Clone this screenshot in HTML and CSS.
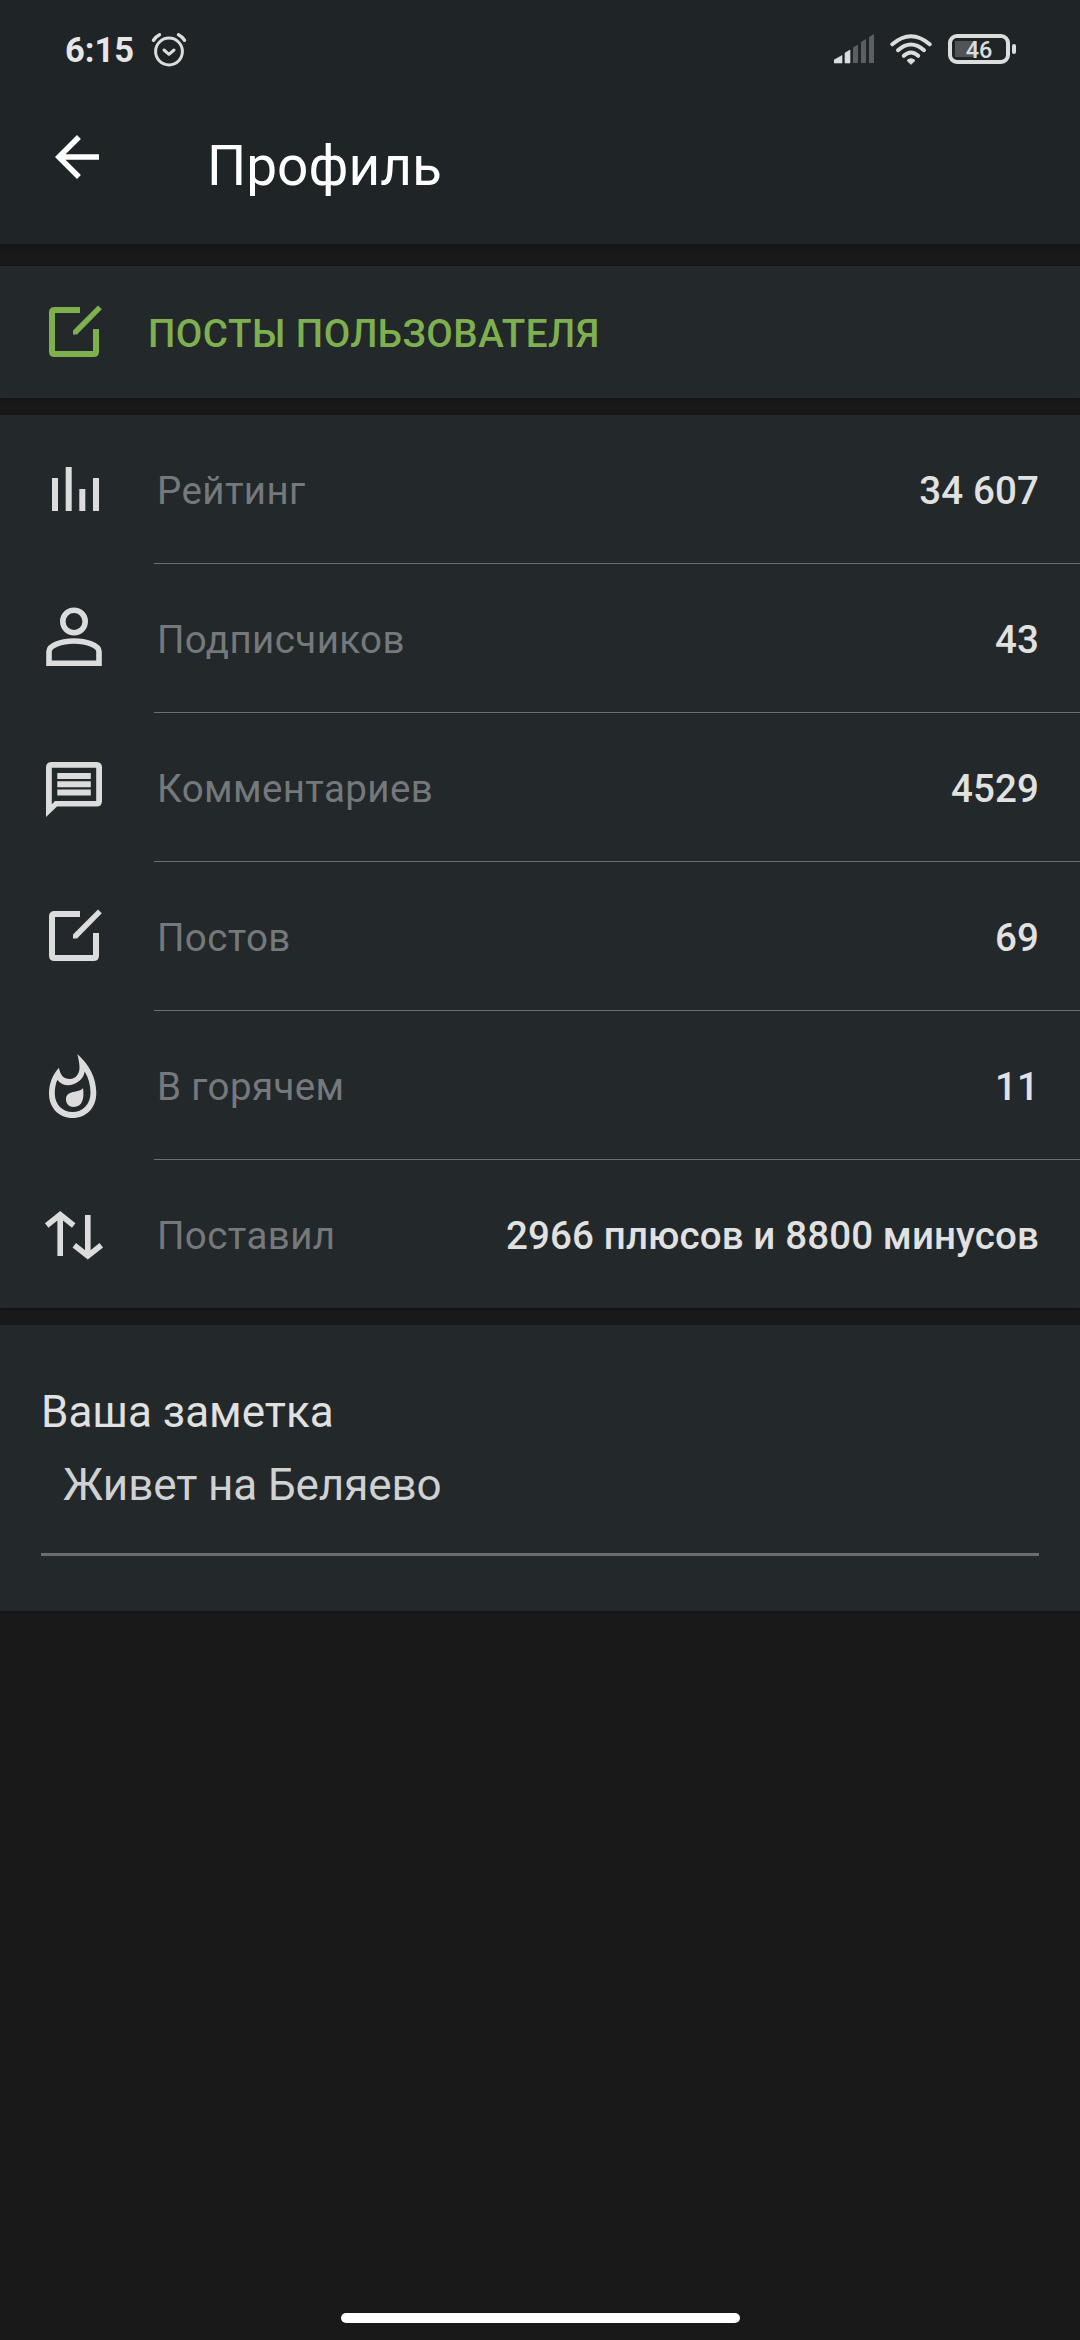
FILE: index.html
```html
<!DOCTYPE html>
<html lang="ru">
<head>
    <meta charset="UTF-8">
    <meta name="viewport" content="width=device-width, initial-scale=1.0">
    <title>Профиль</title>
    <link rel="stylesheet" href="styles.css">
</head>
<body>
    <svg class="sprite">
        <symbol id="icon-edit" viewBox="0 0 66 66">
            <path d="M39 11H13.500Q11 11 11 13.500V52.500Q11 55 13.500 55H52.500Q55 55 55 52.500V30" fill="none" stroke="currentColor" stroke-width="6"/>
            <path d="M57 6.5L60.8 10.2L36 35.5H32V31.5Z" fill="currentColor"/>
        </symbol>
    </svg>

    <header class="header">
        <div class="status-bar">
            <span class="time">6:15</span>
            <svg class="alarm" width="36" height="36" viewBox="0 0 36 36">
                <g fill="none" stroke="currentColor" stroke-width="3" stroke-linecap="round" stroke-linejoin="round">
                    <circle cx="18" cy="19.5" r="13.4"/>
                    <path d="M13 18L18 22.3L23 18"/>
                    <path d="M2.5 8.3Q5 4.5 8.5 2.8M33.5 8.3Q31 4.5 27.5 2.8" stroke-width="3.4"/>
                </g>
            </svg>
            <div class="status-icons">
                <svg width="40" height="30" viewBox="0 0 40 30">
                    <path d="M0 29V26L8 21.5V29ZM11 29V19L16 16V29Z" fill="currentColor" stroke="currentColor" stroke-width=".6" stroke-linejoin="round"/>
                    <path d="M19 29V13.5L24 10.5V29ZM27 29V8L32 5V29ZM35 29V3L40 0V29Z" fill="#5b5f61"/>
                </svg>
                <svg width="42" height="31" viewBox="0 0 42 31">
                    <g fill="none" stroke="currentColor" stroke-width="4" stroke-linecap="round">
                        <path d="M2.3 10.3Q21 -5.8 39.7 10.3"/>
                        <path d="M8 16.2Q21 4.8 34 16.2"/>
                        <path d="M13.8 21.8Q21 15.2 28.2 21.8"/>
                    </g>
                    <path d="M17 26.5Q21 23 25 26.5L21 30.3Z" fill="currentColor" stroke="currentColor" stroke-linejoin="round"/>
                </svg>
                <div class="battery"><span>46</span></div>
            </div>
        </div>
        <div class="toolbar">
            <svg class="back" viewBox="0 0 24 24">
                <path d="M20 11H7.83l5.59-5.59L12 4l-8 8 8 8 1.41-1.41L7.83 13H20v-2z" fill="currentColor"/>
            </svg>
            <h1>Профиль</h1>
        </div>
    </header>

    <main>
        <a class="card posts-link">
            <svg class="icon"><use href="#icon-edit"/></svg>
            <span>ПОСТЫ ПОЛЬЗОВАТЕЛЯ</span>
        </a>

        <ul class="card stats">
            <li>
                <svg class="icon" viewBox="0 0 66 66">
                    <path d="M11 22h6v33h-6zM24.7 11h6v44h-6zM38.3 33h6v22h-6zM52 22h6v33h-6z" fill="currentColor"/>
                </svg>
                <div class="stat"><span class="label">Рейтинг</span><span class="value">34 607</span></div>
            </li>
            <li>
                <svg class="icon" viewBox="0 0 66 66">
                    <g fill="none" stroke="currentColor" stroke-width="5.6">
                        <circle cx="33" cy="16.5" r="11.2"/>
                        <path d="M8 58.2V46.5C8 40 21 36 33 36S58 40 58 46.5V58.2Z"/>
                    </g>
                </svg>
                <div class="stat"><span class="label">Подписчиков</span><span class="value">43</span></div>
            </li>
            <li>
                <svg class="icon" viewBox="0 0 66 66">
                    <path d="M10.5 8H55.5Q61 8 61 13.5V47Q61 52.5 55.5 52.5H16L5 63V13.5Q5 8 10.5 8ZM10.8 13.8V50.3L14 47H55.2V13.8Z" fill="currentColor" fill-rule="evenodd"/>
                    <path d="M16.3 19h33.5v6H16.3zM16.3 27.2h33.5v6H16.3zM16.3 35.5h33.5v6H16.3z" fill="currentColor"/>
                </svg>
                <div class="stat"><span class="label">Комментариев</span><span class="value">4529</span></div>
            </li>
            <li>
                <svg class="icon"><use href="#icon-edit"/></svg>
                <div class="stat"><span class="label">Постов</span><span class="value">69</span></div>
            </li>
            <li>
                <svg class="icon" viewBox="0 0 66 66">
                    <path fill="currentColor" fill-rule="evenodd" d="M36.3 2C47.5 12 55.3 25 55.3 41C55.3 56 45 66 31.7 66C18 66 8 56 8 41.5C8 31 12 22 18 15.7C19 23 23 27 28.5 27C36 27 39.5 20 38.3 12.5C38 8.5 37 5 36.3 2ZM16.3 28C21 33.5 27 34.5 33 32C39 29.5 43 25 43.6 19.5C47.5 25.5 49.5 33 49.5 41C49.5 52.5 41.5 60 31.7 60C21.5 60 13.8 52.5 13.8 41.5C13.8 36.5 14.5 32 16.3 28Z"/>
                    <path fill="currentColor" d="M42 36C38 41.5 25 37.5 25 47.5C25 52 28.3 55 32.5 55C41.5 55 43.5 46 42 36Z"/>
                </svg>
                <div class="stat"><span class="label">В горячем</span><span class="value">11</span></div>
            </li>
            <li>
                <svg class="icon" viewBox="0 0 66 66">
                    <path d="M19.2 55V15M5.7 24.5L19.2 13.5L32.7 24.5M46.8 14V54M33.3 44.2L46.8 55L60.3 44.2" fill="none" stroke="currentColor" stroke-width="5.6"/>
                </svg>
                <div class="stat"><span class="label">Поставил</span><span class="value">2966 плюсов и 8800 минусов</span></div>
            </li>
        </ul>

        <section class="card note">
            <h2>Ваша заметка</h2>
            <p>Живет на Беляево</p>
        </section>
    </main>

    <div class="home-bar"></div>
</body>
</html>
```
FILE: styles.css
```css
:root {
    --bg: #191919;
    --header: #1f2426;
    --card: #23282b;
    --accent: #7fb04f;
    --text: #e1e1e1;
    --icon: #dcdcdc;
    --muted: #75797b;
    --line: #696e70;
}

* {
    margin: 0;
    padding: 0;
    box-sizing: border-box;
}

body {
    display: flex;
    flex-direction: column;
    height: 2340px;
    background: var(--bg);
    color: var(--text);
    font-family: Roboto, sans-serif;
    overflow: hidden;
}

.sprite {
    display: none;
}

svg {
    display: block;
    flex: none;
}

.header {
    height: 244px;
    background: var(--header);
    box-shadow: 0 1px 8px rgba(0, 0, 0, 0.35);
}

.status-bar {
    display: flex;
    align-items: center;
    height: 98px;
    padding: 0 64px 0 65px;
    color: #dcdddd;
}

.time {
    width: 86px;
    padding-top: 2px;
    font-size: 34.5px;
    font-weight: 700;
    line-height: 40px;
    color: #e6e6e6;
    white-space: nowrap;
}

.alarm {
    margin-top: 2px;
}

.status-icons {
    display: flex;
    align-items: center;
    margin-left: auto;
}

.status-icons svg + svg {
    margin-left: 16px;
}

.battery {
    position: relative;
    width: 62px;
    height: 30px;
    margin: 0 6px 0 16px;
    border: 4px solid currentColor;
    border-radius: 9px;
    background: linear-gradient(#505456, #505456) 3px 3px / 22px 16px no-repeat;
    font-size: 23.5px;
    font-weight: 500;
    line-height: 24px;
    text-align: center;
}

.battery::after {
    content: "";
    position: absolute;
    top: 6px;
    right: -10px;
    width: 4px;
    height: 10px;
    border-radius: 2px;
    background: currentColor;
}

.toolbar {
    display: flex;
    align-items: flex-start;
    padding: 26px 44px 0;
    color: #fff;
}

.back {
    width: 66px;
    height: 66px;
}

h1 {
    margin-left: 97px;
    padding-top: 9px;
    font-size: 55px;
    font-weight: 400;
    line-height: 66px;
}

main {
    display: flex;
    flex-direction: column;
    gap: 17px;
    margin-top: 22px;
}

.card {
    background: var(--card);
    box-shadow: 0 1px 4px rgba(0, 0, 0, 0.3);
}

.icon {
    width: 66px;
    height: 66px;
    margin-left: 41px;
}

.posts-link {
    display: flex;
    align-items: center;
    gap: 41px;
    height: 132px;
    color: var(--accent);
    font-size: 38.5px;
    font-weight: 500;
    letter-spacing: 0.5px;
}

.posts-link span {
    padding-top: 2px;
}

.stats {
    list-style: none;
}

.stats li {
    display: flex;
    align-items: center;
    height: 149px;
    color: var(--icon);
}

.stats li:last-child {
    height: 148px;
}

.stats .icon {
    margin-top: -1px;
}

.stat {
    display: flex;
    align-items: center;
    justify-content: space-between;
    flex: 1;
    height: 100%;
    margin-left: 47px;
    padding: 2px 41px 0 3px;
    border-bottom: 1px solid var(--line);
    font-size: 38.5px;
}

.stats li:last-child .stat {
    border-bottom: none;
}

.label {
    color: var(--muted);
    letter-spacing: 0.4px;
}

.value {
    color: var(--text);
    font-weight: 500;
    letter-spacing: 0.12px;
}

.note {
    height: 286px;
    padding: 61px 41px 0;
}

.note h2,
.note p {
    font-size: 44px;
    font-weight: 400;
    line-height: 52px;
}

.note p {
    height: 97px;
    margin-top: 21px;
    padding-left: 22px;
    border-bottom: 3px solid #6d6d6d;
    color: #d0d1d2;
    letter-spacing: -0.1px;
}

.home-bar {
    width: 399px;
    height: 10px;
    margin: auto auto 17px;
    border-radius: 5px;
    background: #fff;
}
```
